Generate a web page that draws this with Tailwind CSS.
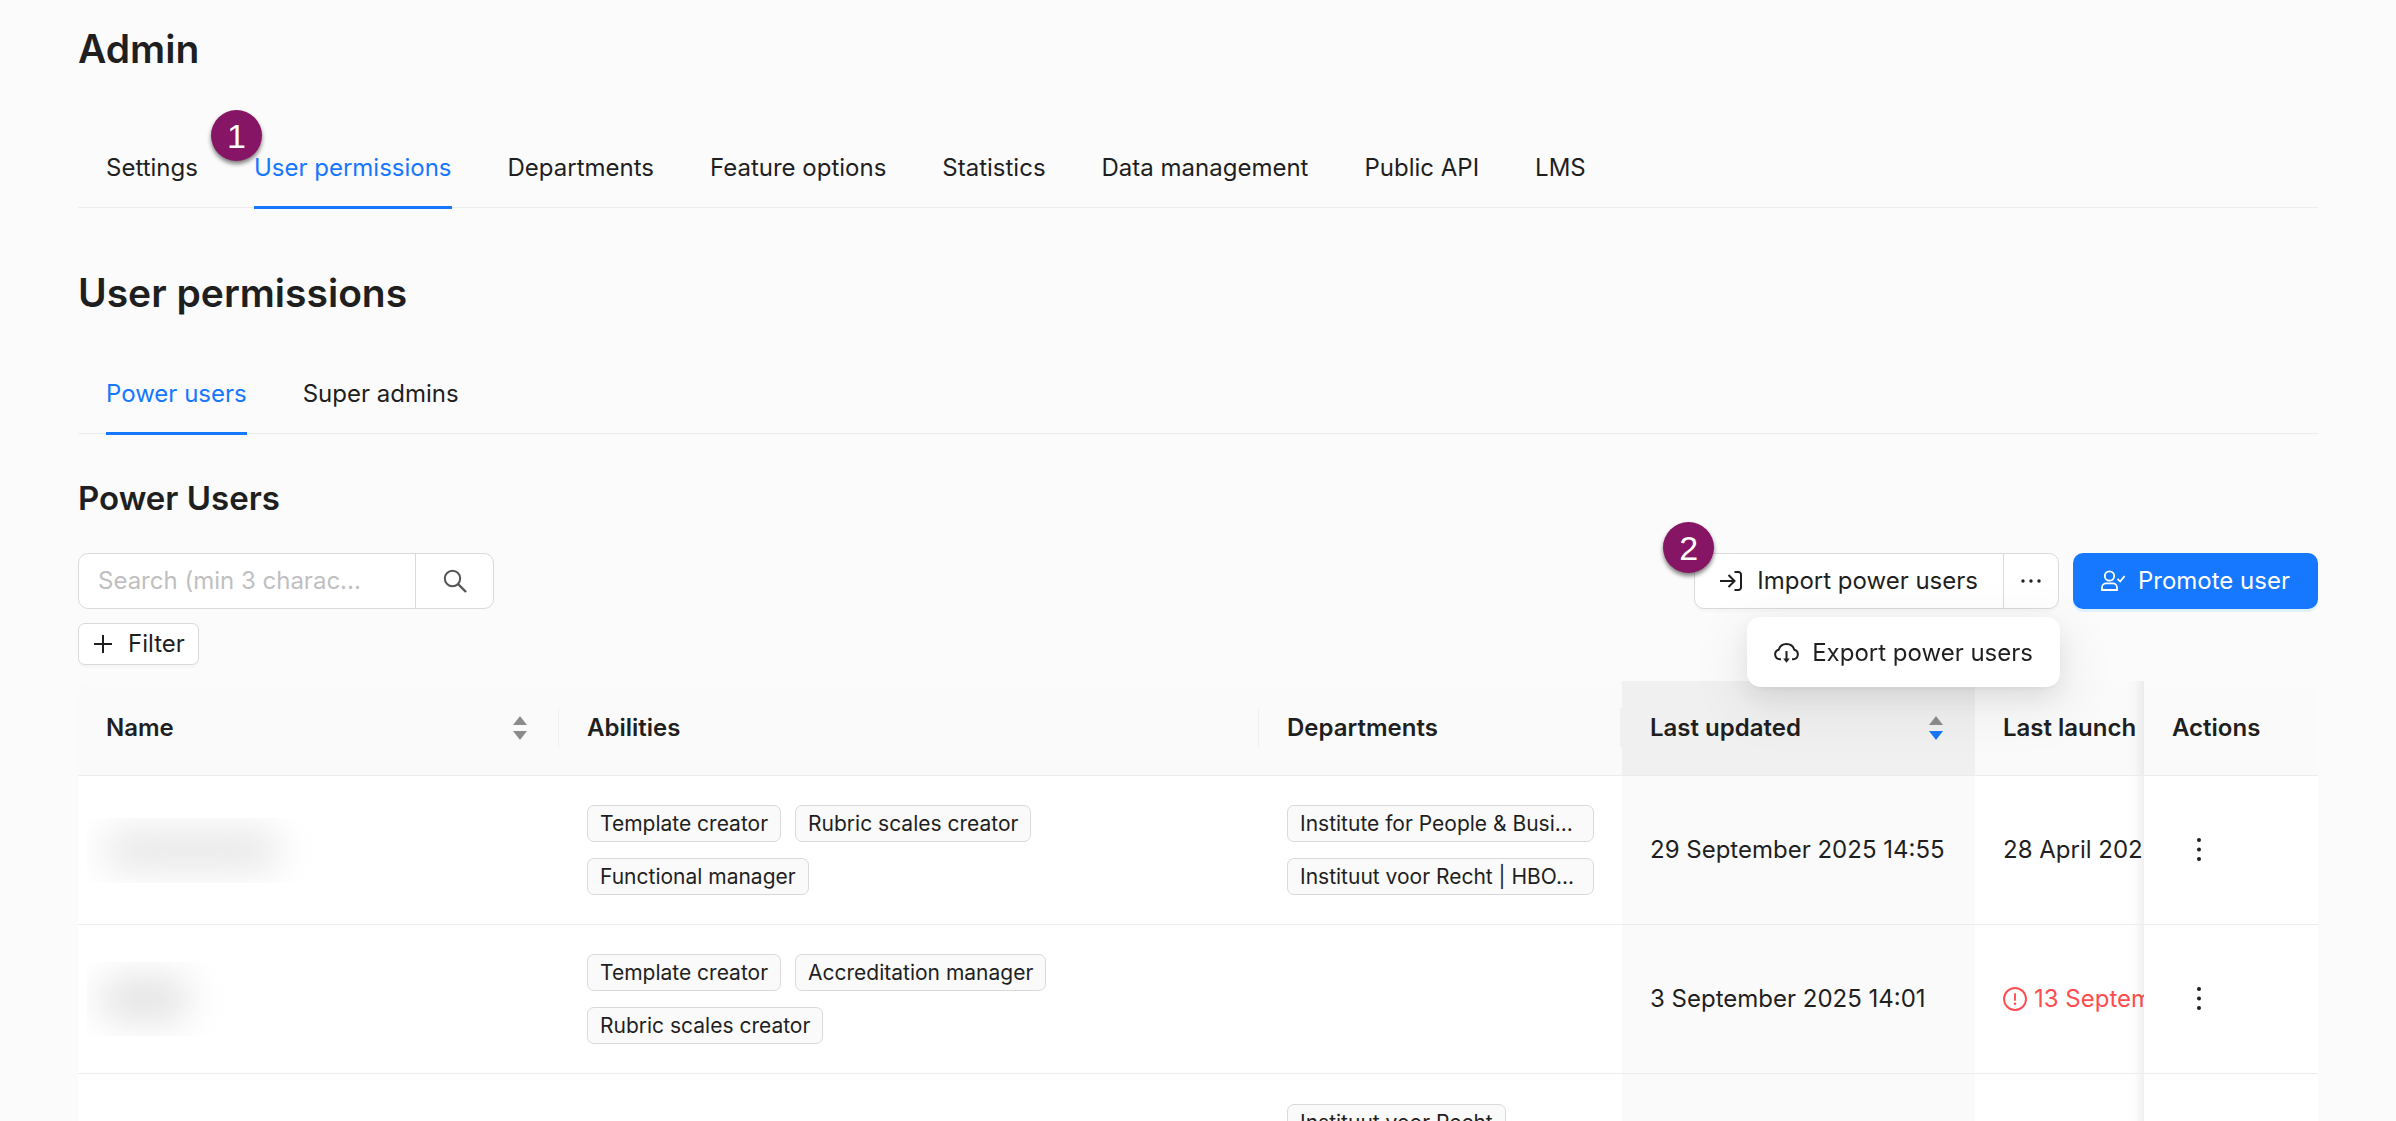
<!DOCTYPE html>
<html lang="en">
<head>
  <meta charset="UTF-8" />
  <meta name="viewport" content="width=device-width, initial-scale=1.0" />
  <title>Admin - User permissions</title>
  <script src="https://cdn.jsdelivr.net/npm/@tailwindcss/browser@4"></script>
</head>
<body class="bg-[#fbfbfb] text-[#1f1f1f] font-['Inter','Liberation_Sans',sans-serif] text-[24px] leading-[38px] h-screen overflow-hidden">
  <main class="px-[78px] pt-[22px]">
    <h1 class="text-[39px] leading-[54px] font-semibold">Admin</h1>

    <!-- Main tabs -->
    <nav class="relative mt-[50px] flex gap-[56px] border-b border-[#ececec] pl-[28px] pt-[23px]">
      <a href="#" class="pb-[20px]">Settings</a>
      <a href="#" class="-mb-[2px] border-b-[3px] border-[#1677ff] pb-[18px] text-[#1677ff]">User permissions</a>
      <a href="#" class="pb-[20px]">Departments</a>
      <a href="#" class="pb-[20px]">Feature options</a>
      <a href="#" class="pb-[20px]">Statistics</a>
      <a href="#" class="pb-[20px]">Data management</a>
      <a href="#" class="pb-[20px]">Public API</a>
      <a href="#" class="pb-[20px]">LMS</a>
      <span class="absolute left-[133px] -top-[16px] flex size-[51px] items-center justify-center rounded-full bg-[#861566] font-['Liberation_Sans',sans-serif] text-[34px] text-white shadow-[0_3px_4px_rgba(0,0,0,0.5)]">1</span>
    </nav>

    <h2 class="mt-[58px] text-[39px] leading-[54px] font-semibold">User permissions</h2>

    <!-- Sub tabs -->
    <nav class="mt-[55px] flex gap-[56px] border-b border-[#ececec] pl-[28px]">
      <a href="#" class="-mb-[2px] border-b-[3px] border-[#1677ff] pb-[18px] text-[#1677ff]">Power users</a>
      <a href="#" class="pb-[20px]">Super admins</a>
    </nav>

    <h3 class="mt-[40px] text-[33px] leading-[48px] font-semibold">Power Users</h3>

    <!-- Toolbar -->
    <div class="mt-[31px] flex items-start justify-between">
      <div>
        <form class="flex h-[56px] w-[416px] overflow-hidden rounded-[10px] border border-[#d9d9d9] bg-white">
          <input type="text" aria-label="Search power users" placeholder="Search (min 3 charac..." class="min-w-0 flex-1 px-[19px] outline-none placeholder:text-[#bfbfbf]">
          <button type="button" aria-label="Search" class="flex w-[78px] items-center justify-center border-l border-[#d9d9d9] text-[#555]">
            <svg class="size-[24px]" viewBox="0 0 24 24" fill="none" stroke="currentColor" stroke-width="2"><circle cx="9.5" cy="9.5" r="7.7"/><path d="M15 15l8 8" stroke-width="2.4"/></svg>
          </button>
        </form>
        <button type="button" class="mt-[14px] flex h-[42px] items-center gap-[16px] rounded-[7px] border border-[#d9d9d9] bg-white pr-[13px] pl-[15px] shadow-[0_3px_0_rgba(0,0,0,0.02)]">
          <svg class="size-[18px]" viewBox="0 0 18 18" fill="none" stroke="currentColor" stroke-width="2"><path d="M9 0v18M0 9h18"/></svg>
          Filter
        </button>
      </div>

      <div class="flex gap-[14px]">
        <div class="relative flex h-[56px] rounded-[10px] border border-[#d9d9d9] bg-white shadow-[0_3px_0_rgba(0,0,0,0.02)]">
          <button type="button" class="flex items-center gap-[14px] pr-[25px] pl-[25px]">
            <svg class="size-[23px]" viewBox="0 0 23 23" fill="none" stroke="currentColor" stroke-width="2"><path d="M0 11h14M8.5 5l6 6-6 6M14.5 2h4a2.5 2.5 0 0 1 2.5 2.5v13a2.5 2.5 0 0 1-2.5 2.5h-4"/></svg>
            Import power users
          </button>
          <button type="button" aria-label="More actions" class="flex w-[55px] items-center justify-center border-l border-[#d9d9d9]">
            <svg class="h-[4px] w-[20px]" viewBox="0 0 20 4" fill="currentColor"><circle cx="2" cy="2" r="1.7"/><circle cx="10" cy="2" r="1.7"/><circle cx="18" cy="2" r="1.7"/></svg>
          </button>
          <span class="absolute -left-[32px] -top-[32px] flex size-[51px] items-center justify-center rounded-full bg-[#861566] font-['Liberation_Sans',sans-serif] text-[34px] text-white shadow-[0_3px_4px_rgba(0,0,0,0.5)]">2</span>

          <!-- Dropdown menu -->
          <div class="absolute top-[63px] -right-[2px] z-20 rounded-[14px] bg-white px-[7px] pt-[8px] pb-[6px] shadow-[0_10px_28px_rgba(0,0,0,0.08),0_5px_10px_-7px_rgba(0,0,0,0.12),0_16px_49px_14px_rgba(0,0,0,0.05)]">
            <button type="button" class="flex h-[56px] items-center gap-[13px] rounded-[7px] px-[20px] whitespace-nowrap">
              <svg class="size-[25px]" viewBox="0 0 25 25" fill="none" stroke="currentColor" stroke-width="2"><path d="M7 18.3H5.8A4.9 4.9 0 0 1 4.7 8.7a8.2 8.2 0 0 1 15.6 0A4.9 4.9 0 0 1 19.2 18.3H18M12.5 10v9"/><path d="M9.2 17.5h6.6l-3.3 4.3z" fill="currentColor" stroke="none"/></svg>
              Export power users
            </button>
          </div>
        </div>
        <button type="button" class="flex h-[56px] items-center gap-[13px] rounded-[10px] bg-[#1677ff] px-[28px] text-white shadow-[0_3px_0_rgba(5,145,255,0.1)]">
          <svg class="size-[24px]" viewBox="0 0 24 24" fill="none" stroke="currentColor" stroke-width="1.8"><circle cx="8.5" cy="7" r="4.7"/><path d="M1 21v-2.5a4.2 4.2 0 0 1 4.2-4.2h6.600a4.2 4.2 0 0 1 4.2 4.2V21zM16.5 9.8l2.6 2.7 4.5-5.5"/></svg>
          Promote user
        </button>
      </div>
    </div>

    <!-- Users table -->
    <div class="mt-[16px] overflow-x-hidden rounded-t-[14px]">
      <table class="w-[calc(100%+159px)] table-fixed border-separate border-spacing-0 bg-white text-left">
        <thead>
          <tr class="h-[95px] bg-[#fafafa] *:border-b *:border-[#ececec] *:px-[28px] *:font-semibold">
            <th class="relative w-[481px]">
              <div class="-mr-px flex items-center justify-between pr-[4px]">
                Name
                <svg class="h-[24px] w-[16px]" viewBox="0 0 16 24"><path d="M8 0l7 9H1z" fill="#8c8c8c"/><path d="M8 24l7-9H1z" fill="#8c8c8c"/></svg>
              </div>
              <span class="absolute top-[27px] right-0 h-[39px] w-px bg-[#f0f0f0]"></span>
            </th>
            <th class="relative">Abilities<span class="absolute top-[27px] right-0 h-[39px] w-px bg-[#f0f0f0]"></span></th>
            <th class="relative w-[363px]">Departments<span class="absolute top-[27px] right-0 h-[39px] w-[2px] bg-[#f0f0f0]"></span></th>
            <th class="w-[353px] bg-[#f0f0f0]">
              <div class="-mr-px flex items-center justify-between pr-[4px]">
                Last updated
                <svg class="h-[24px] w-[16px]" viewBox="0 0 16 24"><path d="M8 0l7 9H1z" fill="#8c8c8c"/><path d="M8 24l7-9H1z" fill="#1677ff"/></svg>
              </div>
            </th>
            <th class="w-[328px]">Last launch</th>
            <th class="sticky right-0 w-[174px] bg-[#fafafa]"><span class="absolute inset-y-0 -left-[18px] w-[18px] bg-linear-to-r from-transparent via-black/1 to-black/6"></span>Actions</th>
          </tr>
        </thead>
        <tbody>
          <tr class="h-[149px] *:border-b *:border-[#ececec] *:px-[28px]">
            <td>
              <div class="-ml-[19px] h-[65px] w-[240px] overflow-hidden py-[10px] pl-[16px]"><div class="h-[44px] w-[178px] rounded-full bg-[#e9e9e9] blur-[18px]"></div></div>
            </td>
            <td>
              <div class="flex flex-wrap gap-x-[14px] gap-y-[16px] text-[21px] leading-[35px] *:rounded-[7px] *:border *:border-[#d9d9d9] *:bg-[#fafafa] *:px-[12px]">
                <span>Template creator</span>
                <span>Rubric scales creator</span>
                <span>Functional manager</span>
              </div>
            </td>
            <td>
              <div class="flex flex-wrap gap-x-[14px] gap-y-[16px] text-[21px] leading-[35px] *:rounded-[7px] *:border *:border-[#d9d9d9] *:bg-[#fafafa] *:px-[12px]">
                <span class="w-[307px] whitespace-nowrap">Institute for People &amp; Busi...</span>
                <span class="w-[307px] whitespace-nowrap">Instituut voor Recht | HBO...</span>
              </div>
            </td>
            <td class="bg-[#fafafa]">29 September 2025 14:55</td>
            <td class="whitespace-nowrap">28 April 2025 10:12</td>
            <td class="sticky right-0 bg-white">
              <span class="absolute inset-y-0 -left-[18px] w-[18px] bg-linear-to-r from-transparent via-black/1 to-black/6"></span>
              <button type="button" aria-label="Row actions" class="flex size-[54px] items-center justify-center">
                <svg class="h-[26px] w-[6px]" viewBox="0 0 6 26" fill="currentColor"><circle cx="3" cy="3" r="2"/><circle cx="3" cy="12.5" r="2"/><circle cx="3" cy="22" r="2"/></svg>
              </button>
            </td>
          </tr>
          <tr class="h-[149px] *:border-b *:border-[#ececec] *:px-[28px]">
            <td>
              <div class="-ml-[19px] h-[74px] w-[160px] overflow-hidden py-[14px] pl-[12px]"><div class="h-[46px] w-[92px] rounded-full bg-[#e4e4e4] blur-[18px]"></div></div>
            </td>
            <td>
              <div class="flex flex-wrap gap-x-[14px] gap-y-[16px] text-[21px] leading-[35px] *:rounded-[7px] *:border *:border-[#d9d9d9] *:bg-[#fafafa] *:px-[12px]">
                <span>Template creator</span>
                <span>Accreditation manager</span>
                <span>Rubric scales creator</span>
              </div>
            </td>
            <td></td>
            <td class="bg-[#fafafa]">3 September 2025 14:01</td>
            <td class="whitespace-nowrap text-[#ff4d4f]">
              <div class="flex items-center gap-[7px]">
                <svg class="size-[24px] shrink-0" viewBox="0 0 24 24" fill="none" stroke="currentColor" stroke-width="1.9"><circle cx="12" cy="12" r="11"/><path d="M12 6.2v7.6"/><circle cx="12" cy="16.7" r="1.3" fill="currentColor" stroke="none"/></svg>
                13 September 2024
              </div>
            </td>
            <td class="sticky right-0 bg-white">
              <span class="absolute inset-y-0 -left-[18px] w-[18px] bg-linear-to-r from-transparent via-black/1 to-black/6"></span>
              <button type="button" aria-label="Row actions" class="flex size-[54px] items-center justify-center">
                <svg class="h-[26px] w-[6px]" viewBox="0 0 6 26" fill="currentColor"><circle cx="3" cy="3" r="2"/><circle cx="3" cy="12.5" r="2"/><circle cx="3" cy="22" r="2"/></svg>
              </button>
            </td>
          </tr>
          <tr class="h-[149px] *:px-[28px] *:pt-[30px] *:align-top">
            <td></td>
            <td></td>
            <td>
              <div class="flex flex-wrap text-[21px] leading-[35px] *:rounded-[7px] *:border *:border-[#d9d9d9] *:bg-[#fafafa] *:px-[12px]">
                <span>Instituut voor Recht</span>
              </div>
            </td>
            <td class="bg-[#fafafa]"></td>
            <td></td>
            <td class="sticky right-0 bg-white"><span class="absolute inset-y-0 -left-[18px] w-[18px] bg-linear-to-r from-transparent via-black/1 to-black/6"></span></td>
          </tr>
        </tbody>
      </table>
    </div>
  </main>
</body>
</html>
